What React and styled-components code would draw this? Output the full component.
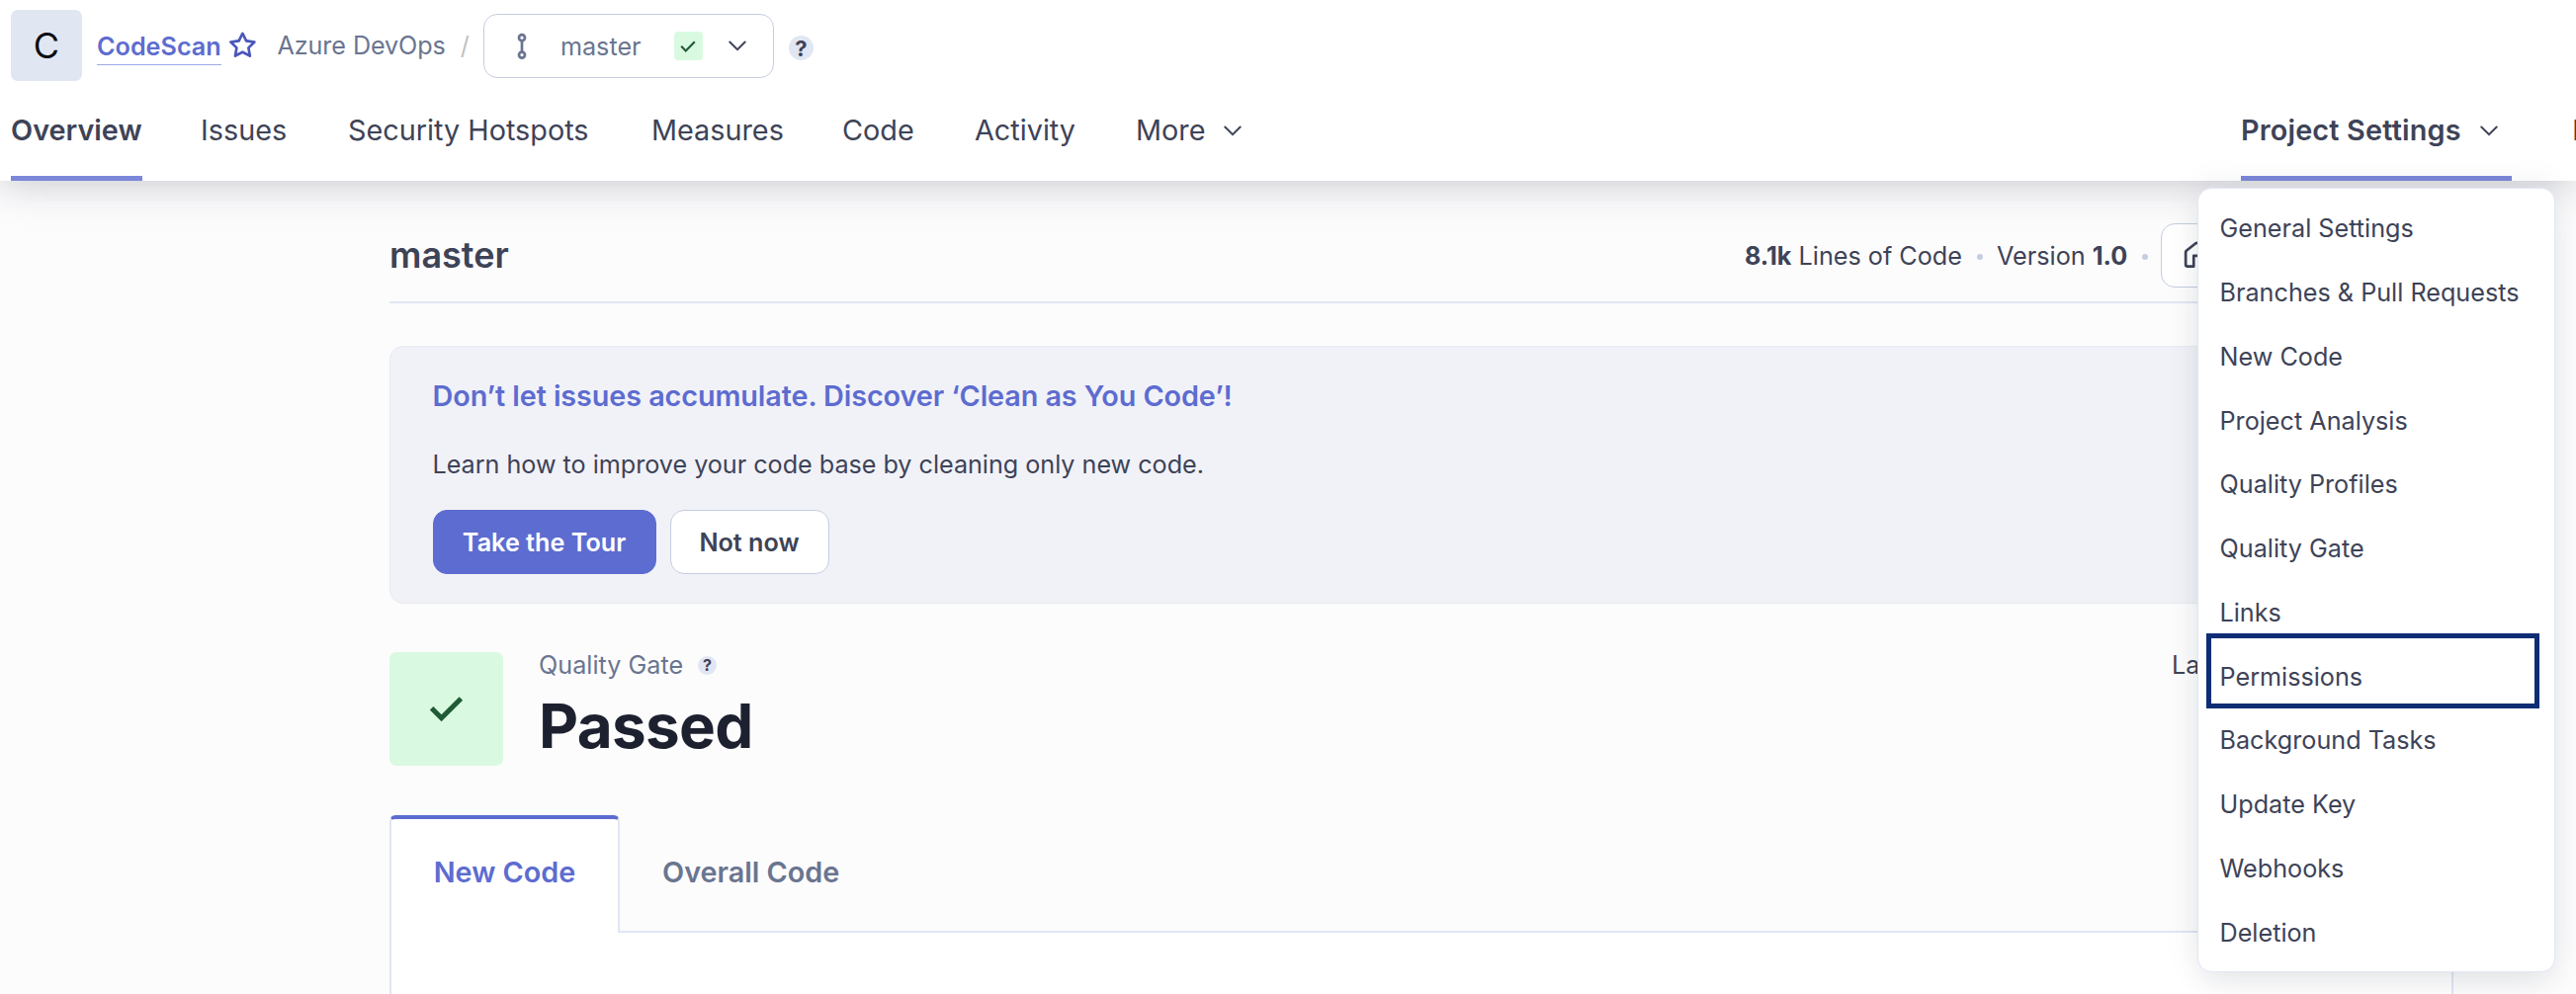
import React from "react";
import styled, { createGlobalStyle } from "styled-components";

const Global = createGlobalStyle`
  * { box-sizing: border-box; }
  body { margin: 0; background: #fcfcfd; font-family: Inter, "Liberation Sans", sans-serif; font-size: 25.2px; line-height: 36px; color: #3e4357; overflow: hidden; }
  button { font: inherit; color: inherit; }
  h1, h2, p { margin: 0; }
`;
const Page = styled.div`height: 1006px; overflow: hidden; position: relative;`;
const Header = styled.header`
  height: 183px; background: #fff; position: relative;
  box-shadow: 0 0 40px rgba(29,33,47,.27);
  padding: 10px 0 0 11px;
`;
const Crumbs = styled.div`display: flex; align-items: center; height: 72px;`;
const Avatar = styled.div`
  width: 72px; height: 72px; border-radius: 7px; background: #e1e6f3; color: #0b0c10;
  display: flex; align-items: center; justify-content: center; font-size: 36px;
`;
const ProjectLink = styled.a`
  margin: 2px 0 0 15px; font-weight: 600; color: #5d6cd0; line-height: 36px; border-bottom: 1.8px solid #9da8e8;
`;
const Org = styled.span`margin-left: 21px; color: #6a7590; letter-spacing: -.1px;`;
const Slash = styled.span`margin-left: 15px; color: #bfbfc4;`;
const Star = styled.svg`margin-left: 7px;`;
const BranchButton = styled.button`
  display: flex; align-items: center; width: 294px; height: 65px; margin: 1px 0 0 14px; padding: 0 27px 0 31px;
  border: 1.8px solid #c5cddf; border-radius: 14px; background: #fff; color: #6a7590;
`;
const BranchName = styled.span`margin: 0 auto 0 32px;`;
const PassBadge = styled.span`
  width: ${(p) => p.$size}px; height: ${(p) => p.$size}px; border-radius: ${(p) => p.$radius}px;
  background: #d9fae0; display: flex; align-items: center; justify-content: center; flex: none;
`;
const Help = styled.span`
  width: ${(p) => p.$size}px; height: ${(p) => p.$size}px; border-radius: 50%; margin: ${(p) => p.$margin};
  background: #e1e6f3; color: #3e4357; font-weight: 700; font-size: ${(p) => p.$font}px; line-height: 1;
  display: inline-flex; align-items: center; justify-content: center;
`;
const Nav = styled.nav`display: flex; height: 101px; font-size: 28.8px; white-space: nowrap;`;
const NavItem = styled.a`
  display: flex; align-items: center; padding-top: 4px; width: ${(p) => p.$w}px; margin-right: ${(p) => p.$gap}px; flex: none;
  border-bottom: 5px solid ${(p) => (p.$active ? "#7b87d9" : "transparent")}; font-weight: ${(p) => (p.$active ? 600 : 400)};
  letter-spacing: ${(p) => p.$track || 0}px;
`;
const ChevronSlot = styled.span`margin-left: ${(p) => p.$gap}px; display: flex;`;
const Spacer = styled.span`flex: 1;`;
const Main = styled.main`width: 2088px; margin: 0 auto 0 394px; padding-top: 43px;`;
const TitleRow = styled.div`
  display: flex; align-items: center; height: 81px; padding-bottom: 14px; border-bottom: 2px solid #e1e6f3;
`;
const Title = styled.h1`font-size: 36px; line-height: 40px; font-weight: 600; margin-bottom: 2px;`;
const Facts = styled.div`
  display: flex; align-items: center; margin-left: auto; width: 717px; flex: none; white-space: nowrap;
  b { font-weight: 700; }
`;
const Dot = styled.i`width: 6px; height: 6px; border-radius: 50%; background: #c5cddf; margin: 2px ${(p) => p.$right}px 0 15px;`;
const HomeButton = styled.button`
  width: 73px; height: 65px; border: 1.8px solid #c5cddf; border-radius: 14px; background: #fff; padding: 0;
  display: flex; align-items: center; justify-content: center;
`;
const Promo = styled.section`
  margin-top: 43px; height: 261px; border: 1.8px solid #e9eaef; border-radius: 14px; background: #f1f2f8;
  padding: 32px 42.5px;
`;
const PromoTitle = styled.h2`font-size: 28.8px; line-height: 36px; font-weight: 600; color: #5d6cd0; letter-spacing: -.1px;`;
const PromoText = styled.p`margin-top: 33px; letter-spacing: -.03px;`;
const Actions = styled.div`display: flex; gap: 14px; margin-top: 28px;`;
const Button = styled.button`
  height: 65px; width: ${(p) => p.$w}px; border-radius: 14px; font-weight: 600; padding: 0;
  background: ${(p) => (p.$primary ? "#5d6cd0" : "#fff")}; color: ${(p) => (p.$primary ? "#fff" : "#3e4357")};
  border: 1.8px solid ${(p) => (p.$primary ? "#5d6cd0" : "#c5cddf")};
`;
const Gate = styled.section`display: flex; margin-top: 49px; height: 115px;`;
const GateText = styled.div`margin-left: 36px;`;
const GateLabel = styled.div`display: flex; align-items: center; height: 26px; color: #6a7590;`;
const GateStatus = styled.div`
  font-size: 62px; line-height: 72px; font-weight: 700; letter-spacing: -.7px; color: #1d212f; margin-top: 13px;
`;
const LastAnalysis = styled.div`margin-left: auto; width: 285px; line-height: 26px; white-space: nowrap;`;
const Tabs = styled.div`display: flex; margin-top: 50px; height: 119px; font-size: 28.8px; font-weight: 600;`;
const ActiveTab = styled.button`
  width: 233px; padding: 0 0 7px; color: #5d6cd0; background: #fff; border: 2px solid #e1e6f3; border-top: 4px solid #5d6cd0;
  border-bottom: 0; border-radius: 6px 6px 0 0; font-weight: 600;
`;
const TabRest = styled.div`
  flex: 1; display: flex; align-items: center; padding: 0 0 1px 43px; color: #6a7590; border-bottom: 2px solid #e1e6f3;
`;
const TabPanel = styled.div`height: 100px; background: #fff; border: 2px solid #e1e6f3; border-top: 0;`;
const Menu = styled.div`
  position: absolute; left: 2223px; top: 190px; width: 362px; height: 794px; padding: 8px 0; background: #fff;
  border: 1.8px solid #e1e6f3; border-radius: 14px; box-shadow: 0 14.4px 28.8px -7px rgba(29,33,47,.08), 0 0 36px rgba(29,33,47,.08);
`;
const MenuItem = styled.a`position: relative; display: flex; align-items: center; height: 64.75px; padding-left: 21.5px;`;
const Outline = styled.span`
  position: absolute; left: 8px; top: -11px; width: 337px; height: 76px; border: 5px solid #0e2d75;
`;

const Check = ({ size, weight }) => (
  <svg width={size} height={size * 0.75} viewBox="0 0 20 15" fill="none" stroke="#215b36" strokeWidth={weight}>
    <path d="M1.5 7.3l5.7 5.7L18.5 1.7" />
  </svg>
);
const Chevron = () => (
  <svg width="18" height="11" viewBox="0 0 18 11" fill="none" stroke="#3e4357" strokeWidth="2" strokeLinecap="round">
    <path d="M1.3 1.5L9 9.2l7.7-7.7" />
  </svg>
);
const StarIcon = () => (
  <Star width="28.8" height="28.8" viewBox="0 0 16 16" fill="#4b56bb">
    <path d="M8 .25a.75.75 0 0 1 .673.418l1.882 3.815 4.21.612a.75.75 0 0 1 .416 1.279l-3.046 2.97.719 4.192a.751.751 0 0 1-1.088.791L8 12.347l-3.766 1.98a.75.75 0 0 1-1.088-.79l.72-4.194L.818 6.374a.75.75 0 0 1 .416-1.28l4.21-.611L7.327.668A.75.75 0 0 1 8 .25Zm0 2.445L6.615 5.5a.75.75 0 0 1-.564.41l-3.097.45 2.24 2.184a.75.75 0 0 1 .216.664l-.528 3.084 2.769-1.456a.75.75 0 0 1 .698 0l2.77 1.456-.53-3.084a.75.75 0 0 1 .216-.664l2.24-2.183-3.096-.45a.75.75 0 0 1-.564-.41L8 2.694Z" />
  </Star>
);
const HomeIcon = () => (
  <svg width="28.8" height="28.8" viewBox="0 0 16 16" fill="#3e4357">
    <path d="M6.906.664a1.749 1.749 0 0 1 2.187 0l5.25 4.2c.415.332.657.835.657 1.367v7.019A1.75 1.75 0 0 1 13.25 15h-3.5a.75.75 0 0 1-.75-.75V9H7v5.25a.75.75 0 0 1-.75.75h-3.5A1.75 1.75 0 0 1 1 13.25V6.23c0-.531.242-1.034.657-1.366l5.25-4.2Zm1.25 1.171a.25.25 0 0 0-.312 0l-5.25 4.2a.25.25 0 0 0-.094.196v7.019c0 .138.112.25.25.25H5.5V8.25a.75.75 0 0 1 .75-.75h3.5a.75.75 0 0 1 .75.75v5.25h2.75a.25.25 0 0 0 .25-.25V6.23a.25.25 0 0 0-.094-.195Z" />
  </svg>
);
const BranchIcon = () => (
  <svg width="14" height="28" viewBox="0 0 14 28" fill="none" stroke="#6a7590" strokeWidth="2.7">
    <circle cx="7" cy="5.2" r="3" /><circle cx="7" cy="22.6" r="3" /><path d="M7 8v12" />
  </svg>
);

const items = ["General Settings", "Branches & Pull Requests", "New Code", "Project Analysis", "Quality Profiles", "Quality Gate",
  "Links", "Permissions", "Background Tasks", "Update Key", "Webhooks", "Deletion"];
const nav = [["Overview", 133, 59], ["Issues", 86, 63], ["Security Hotspots", 244, 63], ["Measures", 132, 61], ["Code", 73, 61], ["Activity", 102, 61]];

export default function App() {
  return (
    <Page>
      <Global />
      <Header>
        <Crumbs>
          <Avatar>C</Avatar>
          <ProjectLink>CodeScan</ProjectLink>
          <StarIcon />
          <Org>Azure DevOps</Org>
          <Slash>/</Slash>
          <BranchButton>
            <BranchIcon />
            <BranchName>master</BranchName>
            <PassBadge $size={29} $radius={4}><Check size={16} weight={2.7} /></PassBadge>
            <ChevronSlot $gap={26}><Chevron /></ChevronSlot>
          </BranchButton>
          <Help $size={25} $font={22} $margin="5px 0 0 15px">?</Help>
        </Crumbs>
        <Nav>
          {nav.map(([label, w, gap], i) => <NavItem key={label} $w={w} $gap={gap} $active={i === 0}>{label}</NavItem>)}
          <NavItem $w={112} $gap={0}>More<ChevronSlot $gap={19}><Chevron /></ChevronSlot></NavItem>
          <Spacer />
          <NavItem $w={274} $gap={61} $active $track={0.18}>Project Settings<ChevronSlot $gap={19}><Chevron /></ChevronSlot></NavItem>
          <NavItem $w={4} $gap={0}>Project Information</NavItem>
        </Nav>
      </Header>
      <Main>
        <TitleRow>
          <Title>master</Title>
          <Facts>
            <span><b>8.1k</b> Lines of Code</span><Dot $right={14} />
            <span>Version <b>1.0</b></span><Dot $right={13} />
            <HomeButton><HomeIcon /></HomeButton>
          </Facts>
        </TitleRow>
        <Promo>
          <PromoTitle>Don’t let issues accumulate. Discover ‘Clean as You Code’!</PromoTitle>
          <PromoText>Learn how to improve your code base by cleaning only new code.</PromoText>
          <Actions><Button $primary $w={226}>Take the Tour</Button><Button $w={161}>Not now</Button></Actions>
        </Promo>
        <Gate>
          <PassBadge $size={115} $radius={7}><Check size={35} weight={2.9} /></PassBadge>
          <GateText>
            <GateLabel>Quality Gate<Help $size={19} $font={16} $margin="0 0 0 15px">?</Help></GateLabel>
            <GateStatus>Passed</GateStatus>
          </GateText>
          <LastAnalysis>La</LastAnalysis>
        </Gate>
        <Tabs><ActiveTab>New Code</ActiveTab><TabRest>Overall Code</TabRest></Tabs>
        <TabPanel />
      </Main>
      <Menu>
        {items.map((t) => <MenuItem key={t}>{t}{t === "Permissions" && <Outline />}</MenuItem>)}
      </Menu>
    </Page>
  );
}
